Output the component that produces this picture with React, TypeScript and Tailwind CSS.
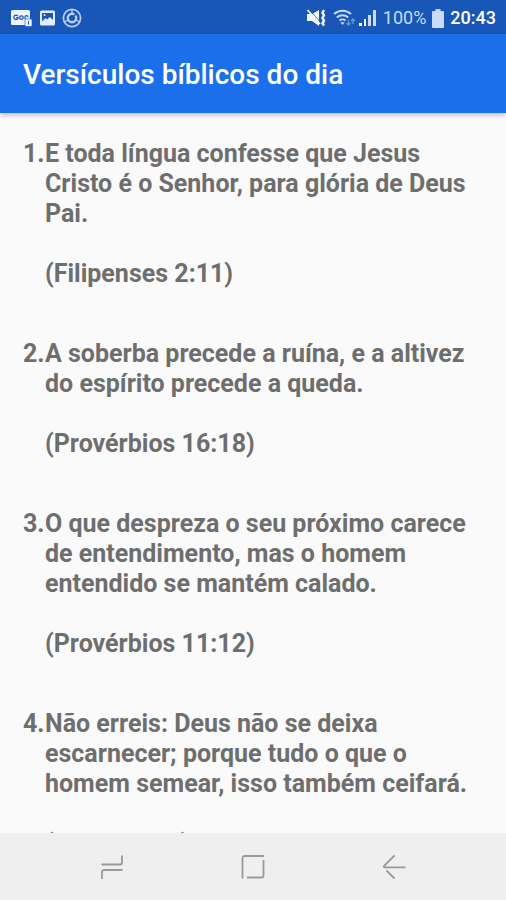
const verses = [
  {
    text: 'E toda língua confesse que Jesus Cristo é o Senhor, para glória de Deus Pai.',
    source: '(Filipenses 2:11)',
  },
  {
    text: 'A soberba precede a ruína, e a altivez do espírito precede a queda.',
    source: '(Provérbios 16:18)',
  },
  {
    text: 'O que despreza o seu próximo carece de entendimento, mas o homem entendido se mantém calado.',
    source: '(Provérbios 11:12)',
  },
  {
    text: 'Não erreis: Deus não se deixa escarnecer; porque tudo o que o homem semear, isso também ceifará.',
    source: '(Gálatas 6:7)',
  },
];

function StatusBar() {
  return (
    <div className="flex h-[34px] shrink-0 items-center justify-between bg-[#1856b8] pt-[2px] pr-[10px] pl-[11px]">
      <div className="flex items-center gap-[7px]">
        <svg width="22" height="18" viewBox="0 0 22 18" aria-hidden="true">
          <rect x="0" y="1" width="19" height="15" rx="1.5" fill="#eef4ff" />
          <g fill="none" stroke="#1856b8" strokeWidth="1.3">
            <path d="M7 7.2A2.2 2.2 0 1 0 7 9.4V8.6H5.2" />
            <circle cx="10.4" cy="8.6" r="1.8" />
            <path d="M14 10V8.2a1.5 1.5 0 0 1 3 0" />
          </g>
          <rect x="14" y="10" width="7" height="7.5" rx="1" fill="#eef4ff" stroke="#1856b8" strokeWidth="0.6" />
          <path d="M17.5 12v3.5" stroke="#1856b8" strokeWidth="1" />
        </svg>
        <svg width="15" height="16" viewBox="0 0 15 16" aria-hidden="true">
          <rect x="0" y="0.5" width="15" height="15" rx="1.5" fill="#e4eefd" />
          <path d="M2 3h11v7l-3-3-3 2.5L5.5 8 2 11.5z" fill="#1856b8" />
          <circle cx="4.5" cy="5" r="1" fill="#e4eefd" />
        </svg>
        <svg width="20" height="20" viewBox="0 0 20 20" fill="none" stroke="#b9cff3" aria-hidden="true">
          <circle cx="10" cy="10" r="8.6" strokeWidth="1.7" />
          <circle cx="10" cy="10" r="4.2" strokeWidth="2.4" />
          <path d="M10 1.5V7M14 12l3.5 2M6 12l-3.5 2" strokeWidth="1.4" />
          <path d="M12 8l2-2" stroke="#1856b8" strokeWidth="1.5" />
        </svg>
      </div>
      <div className="flex items-center">
        <svg className="mr-[7px]" width="20" height="18" viewBox="0 0 20 18" aria-hidden="true">
          <path d="M1 5h5l7-4v16l-7-5H1z" fill="#f4f8ff" />
          <path d="M3.4 1l12 13" stroke="#1856b8" strokeWidth="0.8" />
          <path d="M1.5 1l12.5 14" stroke="#f4f8ff" strokeWidth="1.8" />
          <path d="M18 1l-1.5 2.7 1.5 2.6-1.5 2.7 1.5 2.7-1.5 2.6 1.5 2.4" fill="none" stroke="#f4f8ff" strokeWidth="2.4" />
        </svg>
        <svg className="mr-[3px]" width="23" height="18" viewBox="0 0 23 18" aria-hidden="true">
          <g fill="none" stroke="#c4d8f7" strokeWidth="2">
            <path d="M1 5a12.5 12.5 0 0 1 17 0" />
            <path d="M3.8 8.4a8.4 8.4 0 0 1 11.4 0" />
            <path d="M6.5 11.6a4.4 4.4 0 0 1 6 0" />
          </g>
          <path d="M7.3 13.3h4.4L9.5 16z" fill="#c4d8f7" />
          <path d="M15.5 11v5M13.5 14l2 2 2-2M20 15v-5M18 12l2-2 2 2" fill="none" stroke="#6c96d9" strokeWidth="1.3" />
        </svg>
        <svg className="mr-[7px]" width="17" height="18" viewBox="0 0 17 18" fill="#c9dbf8" aria-hidden="true">
          <rect x="0" y="14" width="3" height="3" fill="#ffffff" />
          <rect x="5" y="10" width="2" height="7" fill="#ffffff" />
          <rect x="9" y="6" width="3" height="11" />
          <rect x="14" y="1" width="3" height="16" />
        </svg>
        <span className="mr-[6px] text-[18px] leading-[24px] text-[#c9dbf8]">100%</span>
        <svg className="mr-[6px]" width="12" height="19" viewBox="0 0 12 19" aria-hidden="true">
          <path d="M3.5 0h5v2H11a1 1 0 0 1 1 1v15a1 1 0 0 1-1 1H1a1 1 0 0 1-1-1V3a1 1 0 0 1 1-1h2.5z" fill="#c9dbf8" />
        </svg>
        <span className="text-[18px] leading-[24px] font-medium text-white">20:43</span>
      </div>
    </div>
  );
}

function NavigationBar() {
  return (
    <nav className="grid h-[67px] shrink-0 grid-cols-3 bg-[#efefef] px-[41px] text-[#999999]">
      <button type="button" aria-label="Recentes" className="flex items-center justify-center">
        <svg width="24" height="26" viewBox="0 0 24 26" fill="none" stroke="currentColor" strokeWidth="1.8">
          <path d="M1.5 10.5H20a2 2 0 0 0 2-2V1.5" />
          <path d="M22.5 16H4a2 2 0 0 0-2 2v7" />
        </svg>
      </button>
      <button type="button" aria-label="Início" className="flex items-center justify-center">
        <svg width="24" height="24" viewBox="0 0 24 24" fill="none" stroke="currentColor" strokeWidth="1.8">
          <path d="M1.5 23.5V3a2 2 0 0 1 2-2H23" />
          <path d="M22.5 5v15.5a2 2 0 0 1-2 2H6" />
        </svg>
      </button>
      <button type="button" aria-label="Voltar" className="flex items-center justify-center">
        <svg width="24" height="26" viewBox="0 0 24 26" fill="none" stroke="currentColor" strokeWidth="1.8">
          <path d="M12.5 1.5L2 12q-1 1.4 1 1.4h20.5" />
          <path d="M4.5 16.5l8 8" />
        </svg>
      </button>
    </nav>
  );
}

export default function App() {
  return (
    <div className="flex h-screen flex-col bg-[#fafafa] font-['Roboto',sans-serif]">
      <StatusBar />
      <header className="z-10 flex h-[79px] shrink-0 items-center bg-[#1c6fea] px-[23px] pt-[2px] shadow-[0_2px_5px_rgba(0,0,0,0.25)]">
        <h1 className="text-[28px] leading-[32px] font-medium text-white">Versículos bíblicos do dia</h1>
      </header>
      <main className="min-h-0 flex-1 overflow-hidden px-[23px] pt-[26px]">
        <ol className="flex flex-col gap-[50px] text-[25px] leading-[30px] font-bold text-[#6e6e6e]">
          {verses.map((verse, index) => (
            <li key={verse.source} className="flex">
              <span className="w-[22px] shrink-0">{index + 1}.</span>
              <div className="flex flex-col gap-[30px]">
                <p>{verse.text}</p>
                <p>{verse.source}</p>
              </div>
            </li>
          ))}
        </ol>
      </main>
      <NavigationBar />
    </div>
  );
}
